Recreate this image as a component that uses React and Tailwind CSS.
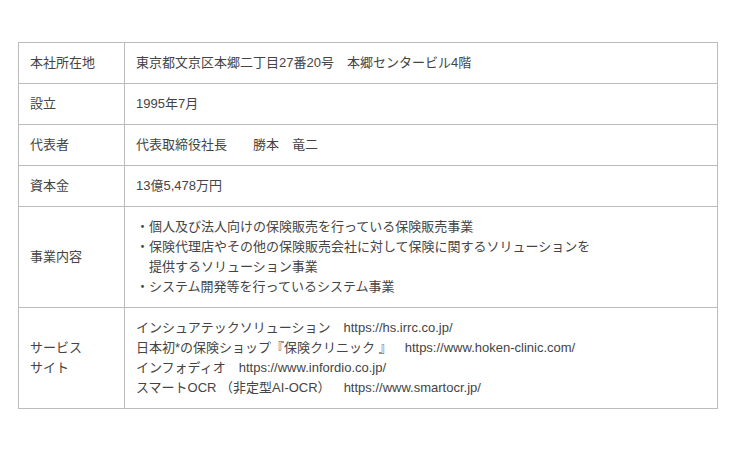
import React from "react";

const gap = <span className="inline-block w-0" />;

const ROWS = [
  { label: ["本社所在地"], value: ["東京都文京区本郷二丁目27番20号　本郷センタービル4階"] },
  { label: ["設立"], value: ["1995年7月"] },
  { label: ["代表者"], value: ["代表取締役社長　　勝本　竜二"] },
  { label: ["資本金"], value: ["13億5,478万円"] },
  {
    label: ["事業内容"],
    value: [
      "・個人及び法人向けの保険販売を行っている保険販売事業",
      "・保険代理店やその他の保険販売会社に対して保険に関するソリューションを",
      "　提供するソリューション事業",
      "・システム開発等を行っているシステム事業",
    ],
  },
  {
    label: ["サービス", "サイト"],
    value: [
      "インシュアテックソリューション　https://hs.irrc.co.jp/",
      <>日本初*の保険ショップ『保険クリニック 』{gap}　https://www.hoken-clinic.com/</>,
      "インフォディオ　https://www.infordio.co.jp/",
      <>スマートOCR （非定型AI-OCR）{gap}　https://www.smartocr.jp/</>,
    ],
  },
];

export default function App() {
  return (
    <div
      className="w-[740px] h-[449px] bg-white pt-[42px] pl-[18px]"
      style={{ fontFamily: '"Liberation Sans", "Noto Sans CJK JP", sans-serif' }}
    >
      <table className="w-[700px] border-collapse text-[13px] leading-[20px] text-[#444]">
        <tbody>
          {ROWS.map((r, i) => (
            <tr key={i}>
              <td className="w-[106px] border border-[#bbb] px-[11px] py-[10px] align-middle">
                {r.label.map((l, j) => (
                  <div key={j}>{l}</div>
                ))}
              </td>
              <td className="border border-[#bbb] px-[11px] py-[10px] align-middle whitespace-pre">
                {r.value.map((v, j) => (
                  <div key={j}>{v}</div>
                ))}
              </td>
            </tr>
          ))}
        </tbody>
      </table>
    </div>
  );
}
